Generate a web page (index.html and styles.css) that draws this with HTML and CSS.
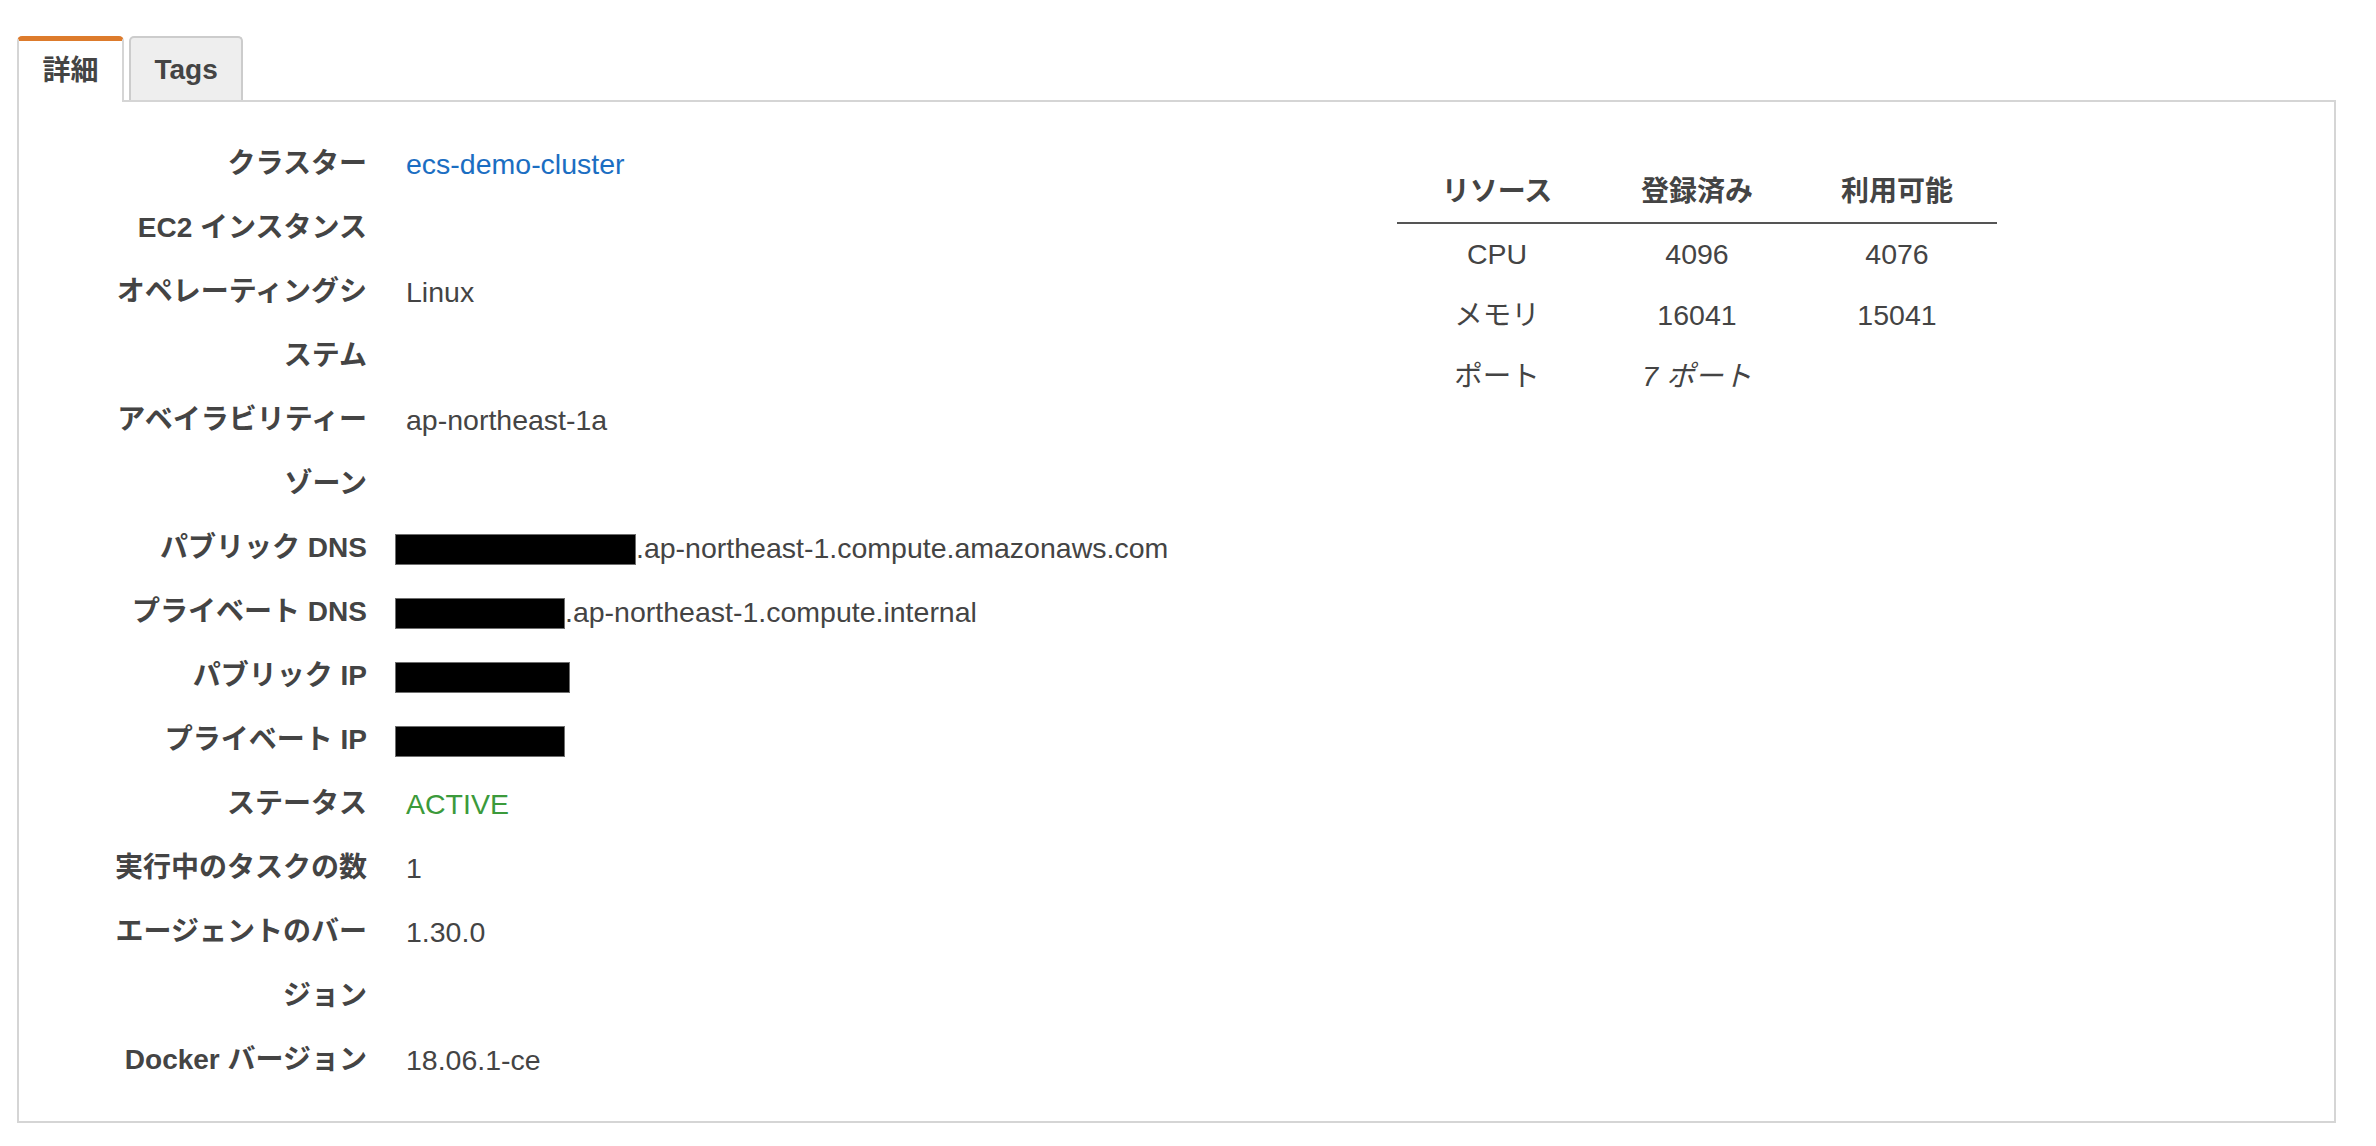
FILE: index.html
```html
<!DOCTYPE html>
<html lang="ja">
<head>
<meta charset="utf-8">
<title>ECS インスタンス詳細</title>
<link rel="stylesheet" href="styles.css">
</head>
<body>
<div class="page">
  <div class="tabs">
    <div class="tab tab-active">詳細</div>
    <div class="tab">Tags</div>
  </div>
  <div class="panel">
    <dl class="details">
      <dt>クラスター</dt>
      <dd><a class="link" href="#">ecs-demo-cluster</a></dd>
      <dt>EC2 インスタンス</dt>
      <dd></dd>
      <dt>オペレーティングシステム</dt>
      <dd>Linux</dd>
      <dt>アベイラビリティーゾーン</dt>
      <dd>ap-northeast-1a</dd>
      <dt>パブリック DNS</dt>
      <dd><span class="redact redact-pubdns"></span>.ap-northeast-1.compute.amazonaws.com</dd>
      <dt>プライベート DNS</dt>
      <dd><span class="redact redact-privdns"></span>.ap-northeast-1.compute.internal</dd>
      <dt>パブリック IP</dt>
      <dd><span class="redact redact-pubip"></span></dd>
      <dt>プライベート IP</dt>
      <dd><span class="redact redact-privip"></span></dd>
      <dt>ステータス</dt>
      <dd class="status-active">ACTIVE</dd>
      <dt>実行中のタスクの数</dt>
      <dd>1</dd>
      <dt>エージェントのバージョン</dt>
      <dd>1.30.0</dd>
      <dt>Docker バージョン</dt>
      <dd>18.06.1-ce</dd>
    </dl>
    <div class="resources">
      <table class="res-table">
        <thead>
          <tr><th>リソース</th><th>登録済み</th><th>利用可能</th></tr>
        </thead>
        <tbody>
          <tr><td>CPU</td><td>4096</td><td>4076</td></tr>
          <tr><td>メモリ</td><td>16041</td><td>15041</td></tr>
          <tr><td>ポート</td><td><em class="ports">7 ポート</em></td><td></td></tr>
        </tbody>
      </table>
    </div>
  </div>
</div>
</body>
</html>
```
FILE: styles.css
```css
html, body {
  margin: 0;
  padding: 0;
  background: #ffffff;
}

body {
  font-family: "Liberation Sans", "Noto Sans CJK JP", sans-serif;
  color: #444444;
}

.page {
  padding: 36px 40px 0 17px;
}

/* Tabs */
.tabs {
  display: flex;
  align-items: flex-end;
  gap: 5px;
}

.tab {
  box-sizing: border-box;
  height: 64px;
  padding: 0 23.5px;
  border: 2px solid #cccccc;
  border-bottom: none;
  border-radius: 5px 5px 0 0;
  background: #eeeeee;
  font-size: 28px;
  font-weight: bold;
  line-height: 63px;
  color: #444444;
}

.tab-active {
  position: relative;
  z-index: 1;
  height: 66px;
  margin-bottom: -2px;
  padding-bottom: 2px;
  border-color: #d5d5d5;
  border-top: 5px solid #dd7b2c;
  background: #ffffff;
  line-height: 59px;
}

/* Panel */
.panel {
  display: flex;
  align-items: flex-start;
  border: 2px solid #d5d5d5;
  padding: 30px 0 29px 84px;
}

.details {
  flex: 0 0 1294px;
  display: grid;
  grid-template-columns: 264px 1fr;
  column-gap: 39px;
  align-items: start;
  margin: 0;
  line-height: 64px;
}

.details dt {
  margin: 0;
  text-align: right;
  font-size: 28px;
  font-weight: bold;
  color: #444444;
}

.details dd {
  margin: 0;
  font-size: 28.5px;
  color: #444444;
  white-space: nowrap;
}

.link {
  color: #1b6ec2;
  text-decoration: none;
}

.details .status-active {
  color: #3b9a3b;
}

.redact {
  display: inline-block;
  box-sizing: border-box;
  height: 31px;
  margin-left: -11px;
  vertical-align: -7px;
  background: #000000;
  border: 1px solid #6e6e6e;
}

.redact-pubdns { width: 241px; }
.redact-privdns { width: 170px; }
.redact-pubip { width: 175px; }
.redact-privip { width: 170px; }

/* Resources table */
.resources {
  margin-top: 29px;
}

.res-table {
  border-collapse: separate;
  border-spacing: 0;
  width: 600px;
  table-layout: fixed;
}

.res-table th {
  width: 200px;
  padding: 0;
  font-size: 28px;
  font-weight: bold;
  line-height: 61px;
  text-align: center;
  color: #444444;
  border-bottom: 2px solid #555555;
}

.res-table td {
  padding: 0;
  font-size: 28.5px;
  line-height: 61px;
  text-align: center;
  color: #444444;
}

.ports {
  font-style: italic;
}
```
